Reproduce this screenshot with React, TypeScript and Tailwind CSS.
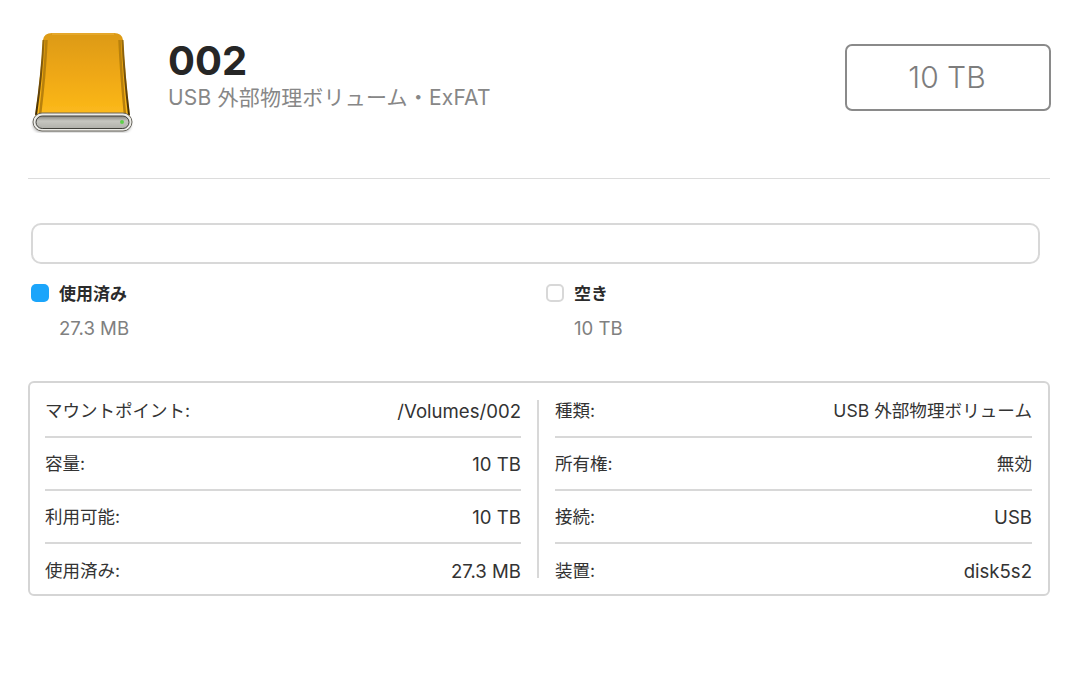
const leftRows = [
  { label: "マウントポイント:", value: "/Volumes/002" },
  { label: "容量:", value: "10 TB" },
  { label: "利用可能:", value: "10 TB" },
  { label: "使用済み:", value: "27.3 MB" },
];

const rightRows = [
  { label: "種類:", value: "USB 外部物理ボリューム", jp: true },
  { label: "所有権:", value: "無効", jp: true },
  { label: "接続:", value: "USB" },
  { label: "装置:", value: "disk5s2" },
];

function DriveIcon() {
  return (
    <svg width="106" height="104" viewBox="0 0 106 104" className="shrink-0">
      <defs>
        <linearGradient id="body" x1="0" y1="0" x2="0" y2="1">
          <stop offset="0" stopColor="#dc9a12" />
          <stop offset="0.5" stopColor="#efa812" />
          <stop offset="1" stopColor="#fdbb1c" />
        </linearGradient>
        <linearGradient id="rim" x1="0" y1="0" x2="0" y2="1">
          <stop offset="0" stopColor="#9a6c08" />
          <stop offset="0.6" stopColor="#6b4a08" />
          <stop offset="1" stopColor="#3f2c06" />
        </linearGradient>
        <linearGradient id="face" x1="0" y1="0" x2="0" y2="1">
          <stop offset="0" stopColor="#85857f" />
          <stop offset="0.4" stopColor="#c6c6c0" />
          <stop offset="1" stopColor="#b0b0aa" />
        </linearGradient>
        <filter id="soft" x="-10%" y="-30%" width="120%" height="160%">
          <feGaussianBlur stdDeviation="1.8" />
        </filter>
        <filter id="tiny" x="-5%" y="-5%" width="110%" height="110%">
          <feGaussianBlur stdDeviation="0.6" />
        </filter>
      </defs>
      <rect x="5" y="88" width="98" height="15" rx="7" fill="#000" opacity="0.3" filter="url(#soft)" />
      <g filter="url(#tiny)">
        <path d="M15 11 Q16 4 24 4 H86 Q94 4 95 11 Q97 45 102 88 H7 Q13 45 15 11 Z" fill="url(#body)" />
        <path d="M15.5 11 Q14 45 8 86" fill="none" stroke="url(#rim)" strokeWidth="2" />
        <path d="M18.5 11 Q17 45 12 86" fill="none" stroke="#b88008" strokeWidth="2.5" />
        <path d="M94.5 11 Q96 45 101 86" fill="none" stroke="url(#rim)" strokeWidth="2" />
        <path d="M91.5 11 Q93 45 97 86" fill="none" stroke="#b88008" strokeWidth="2.5" />
        <path d="M24 5 H86" fill="none" stroke="#eeb540" strokeWidth="1" />
        <rect x="5" y="84" width="99" height="18" rx="9" fill="#ecece8" stroke="#6a675e" strokeWidth="1" />
        <rect x="8" y="87" width="93" height="12.5" rx="6.2" fill="url(#face)" stroke="#3f3f3b" strokeWidth="1" />
        <circle cx="94" cy="93" r="2" fill="#5fd04a" />
      </g>
    </svg>
  );
}

function InfoRow({ label, value, jp, last }: { label: string; value: string; jp?: boolean; last: boolean }) {
  return (
    <div className={`flex h-[53px] items-center justify-between pt-[2px] ${last ? "" : "border-b-2 border-[#d8d8d8]"}`}>
      <span className="text-[17.5px]">{label}</span>
      <span className={jp ? "text-[17.6px]" : "text-[18.6px]"}>{value}</span>
    </div>
  );
}

function LegendItem({ swatch, label, value }: { swatch: string; label: string; value: string }) {
  return (
    <div className="w-[515px] shrink-0">
      <div className="flex h-[18px] items-center gap-[10px]">
        <span className={`h-[18px] w-[18px] rounded-[5px] ${swatch}`} />
        <span className="mt-[3px] text-[17px] font-bold text-[#2b2b2b]">{label}</span>
      </div>
      <div className="mt-[15px] pl-[28px] text-[18.6px] leading-[22px] text-[#808080]">{value}</div>
    </div>
  );
}

export default function App() {
  return (
    <div
      className="h-[673px] w-[1080px] overflow-hidden bg-white pl-[28px] pr-[30px] pt-[29px]"
      style={{ fontFamily: 'Inter, "Noto Sans CJK JP", sans-serif' }}
    >
      <div className="flex h-[104px] items-start">
        <DriveIcon />
        <div className="ml-[34px] flex-1">
          <div className="mt-[8px] text-[40px] font-bold leading-[48px] text-[#262626]">002</div>
          <div className="mt-[1px] text-[21px] leading-[24px] tracking-[0.2px] text-[#878787]">
            USB 外部物理ボリューム・ExFAT
          </div>
        </div>
        <div className="-mr-px mt-[15px] flex h-[67px] w-[206px] items-center justify-center rounded-[7px] border-2 border-[#8a8a8a] pr-[2px] text-[30px] font-light text-[#7d7d7d]">
          10 TB
        </div>
      </div>

      <div className="mt-[45px] h-px bg-[#dcdcdc]" />

      <div className="ml-[3px] mr-[10px] mt-[44px] h-[41px] rounded-[10px] border-2 border-[#d8d8d8]" />

      <div className="ml-[3px] mt-[20px] flex">
        <LegendItem swatch="bg-[#1ba5fb]" label="使用済み" value="27.3 MB" />
        <LegendItem swatch="border-2 border-[#d8d8d8]" label="空き" value="10 TB" />
      </div>

      <div className="mt-[42px] flex h-[215px] rounded-[6px] border-2 border-[#d5d5d5] pl-[15px] pr-[16px] text-[#333333]">
        <div className="w-[476px] pt-[2px]">
          {leftRows.map((row, i) => (
            <InfoRow key={row.label} label={row.label} value={row.value} last={i === leftRows.length - 1} />
          ))}
        </div>
        <div className="mx-[16px] mt-[17px] h-[178px] w-[2px] bg-[#d8d8d8]" />
        <div className="flex-1 pt-[2px]">
          {rightRows.map((row, i) => (
            <InfoRow key={row.label} label={row.label} value={row.value} jp={row.jp} last={i === rightRows.length - 1} />
          ))}
        </div>
      </div>
    </div>
  );
}
